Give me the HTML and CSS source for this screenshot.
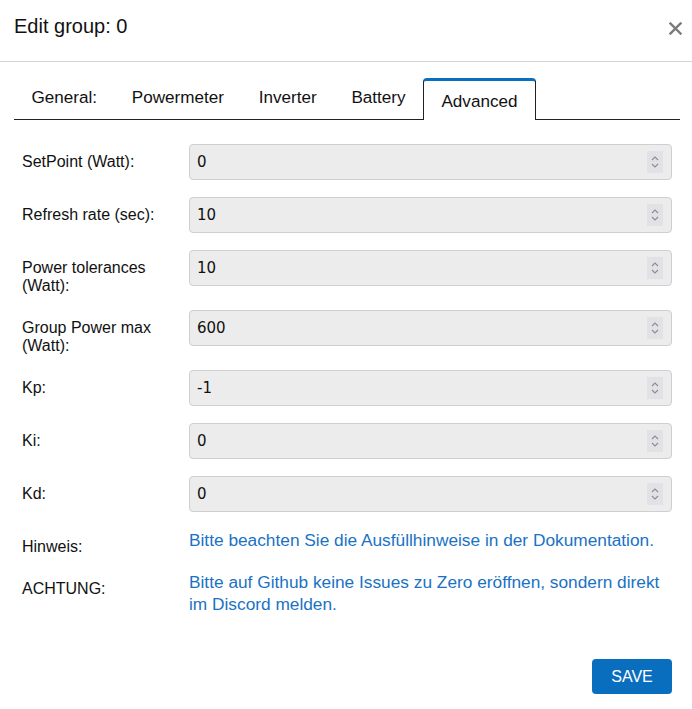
FILE: index.html
```html
<!DOCTYPE html>
<html>
<head>
<meta charset="utf-8">
<link rel="stylesheet" href="styles.css">
</head>
<body>
<div class="modal">
  <div class="header">
    <h1 class="title">Edit group: 0</h1>
    <button class="close" aria-label="close">
      <svg width="13" height="13" viewBox="0 0 13 13"><path d="M1.5 1.5 L11.5 11.5 M11.5 1.5 L1.5 11.5" stroke="#7a7a7a" stroke-width="2.4" stroke-linecap="square"/></svg>
    </button>
  </div>
  <div class="content">
    <ul class="tabs">
      <li class="tab">General:</li>
      <li class="tab">Powermeter</li>
      <li class="tab">Inverter</li>
      <li class="tab">Battery</li>
      <li class="tab active">Advanced</li>
    </ul>
    <div class="form">
      <div class="row"><div class="label">SetPoint (Watt):</div><div class="field"><span class="value">0</span><span class="spin"><svg width="8" height="14" viewBox="0 0 8 14"><path d="M1 5 L4 2 L7 5 M1 9 L4 12 L7 9" fill="none" stroke="#8a8a92" stroke-width="1.1"/></svg></span></div></div>
      <div class="row"><div class="label">Refresh rate (sec):</div><div class="field"><span class="value">10</span><span class="spin"><svg width="8" height="14" viewBox="0 0 8 14"><path d="M1 5 L4 2 L7 5 M1 9 L4 12 L7 9" fill="none" stroke="#8a8a92" stroke-width="1.1"/></svg></span></div></div>
      <div class="row"><div class="label">Power tolerances<br>(Watt):</div><div class="field"><span class="value">10</span><span class="spin"><svg width="8" height="14" viewBox="0 0 8 14"><path d="M1 5 L4 2 L7 5 M1 9 L4 12 L7 9" fill="none" stroke="#8a8a92" stroke-width="1.1"/></svg></span></div></div>
      <div class="row"><div class="label">Group Power max<br>(Watt):</div><div class="field"><span class="value">600</span><span class="spin"><svg width="8" height="14" viewBox="0 0 8 14"><path d="M1 5 L4 2 L7 5 M1 9 L4 12 L7 9" fill="none" stroke="#8a8a92" stroke-width="1.1"/></svg></span></div></div>
      <div class="row"><div class="label">Kp:</div><div class="field"><span class="value">-1</span><span class="spin"><svg width="8" height="14" viewBox="0 0 8 14"><path d="M1 5 L4 2 L7 5 M1 9 L4 12 L7 9" fill="none" stroke="#8a8a92" stroke-width="1.1"/></svg></span></div></div>
      <div class="row"><div class="label">Ki:</div><div class="field"><span class="value">0</span><span class="spin"><svg width="8" height="14" viewBox="0 0 8 14"><path d="M1 5 L4 2 L7 5 M1 9 L4 12 L7 9" fill="none" stroke="#8a8a92" stroke-width="1.1"/></svg></span></div></div>
      <div class="row"><div class="label">Kd:</div><div class="field"><span class="value">0</span><span class="spin"><svg width="8" height="14" viewBox="0 0 8 14"><path d="M1 5 L4 2 L7 5 M1 9 L4 12 L7 9" fill="none" stroke="#8a8a92" stroke-width="1.1"/></svg></span></div></div>
      <div class="row"><div class="label">Hinweis:</div><div class="note">Bitte beachten Sie die Ausfüllhinweise in der Dokumentation.</div></div>
      <div class="row"><div class="label">ACHTUNG:</div><div class="note">Bitte auf Github keine Issues zu Zero eröffnen, sondern direkt im Discord melden.</div></div>
    </div>
    <div class="footer"><button class="save">SAVE</button></div>
  </div>
</div>
</body>
</html>
```
FILE: styles.css
```css
* { box-sizing: border-box; }
html, body { margin: 0; padding: 0; background: #fff; }
body { font-family: "Liberation Sans", Arial, sans-serif; color: #111; }
.modal { width: 692px; }
.header {
  height: 62px;
  border-bottom: 1px solid #d4d4d4;
  display: flex;
  justify-content: space-between;
  align-items: flex-start;
  padding: 14px 10px 0 14px;
}
.title { margin: 0; font-size: 20px; line-height: 24px; font-weight: normal; color: #111; }
.close { border: 0; background: none; padding: 0; margin-top: 8px; width: 13px; height: 13px; display: block; }
.close svg { display: block; }
.content { padding: 16px 12px 0 14px; }
.tabs {
  list-style: none; margin: 0; padding: 0;
  display: flex; align-items: flex-end;
  border-bottom: 1px solid #222;
  height: 42px;
}
.tab {
  font-size: 17.1px; line-height: 20px;
  padding: 0 17.4px 11px 17.4px;
  color: #111;
}
.tab.active {
  border: 1px solid #222;
  border-top: 3px solid #0b6fc0;
  border-bottom: 0;
  border-radius: 4px 4px 0 0;
  background: #fff;
  padding: 11px 17.5px 9px 17.5px;
  margin-bottom: -1px;
  height: 42px;
}
.form { padding: 24px 8px 0 8px; display: flex; flex-direction: column; gap: 17px; }
.row { display: flex; align-items: flex-start; }
.label { width: 167px; flex: none; font-size: 16px; line-height: 18px; padding-top: 9px; margin-bottom: -2px; color: #111; }
.field {
  flex: 1; height: 36px;
  background: #ececec;
  border: 1px solid #cfcfcf;
  border-radius: 4px;
  display: flex; align-items: center; justify-content: space-between;
  padding: 0 8px 0 7px;
}
.value { font-family: "DejaVu Sans", sans-serif; font-size: 15px; color: #111; }
.spin { width: 16px; height: 22px; background: #e2e2e6; display: flex; align-items: center; justify-content: center; }
.spin svg { display: block; }
.note { flex: 1; font-size: 17.3px; line-height: 22px; color: #1a72c4; }
.footer { display: flex; justify-content: flex-end; padding: 44px 8px 0 0; }
.save {
  width: 80px; height: 35px;
  background: #0a6ebf; color: #fff;
  border: 0; border-radius: 4px;
  font-family: "Liberation Sans", Arial, sans-serif; font-size: 16px;
}
```
